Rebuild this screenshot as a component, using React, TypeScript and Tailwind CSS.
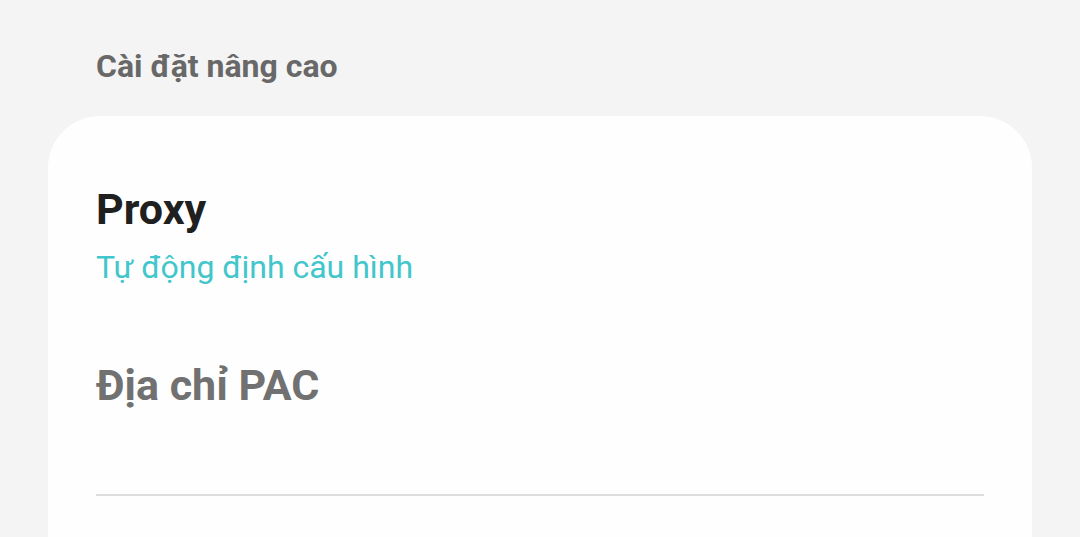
export default function App() {
  return (
    <div className="min-h-screen w-full bg-[#f4f4f4] px-12 font-['Roboto',sans-serif] overflow-hidden">
      <div className="pl-12 pt-[48px] h-[84px]">
        <div className="text-[32px] leading-[36px] font-bold text-[#686868]">Cài đặt nâng cao</div>
      </div>
      <div className="mt-[32px] rounded-t-[52px] bg-[#fefefe] px-12 pt-[68px] pb-10">
        <div className="text-[43px] leading-[50px] font-bold text-[#202020]">Proxy</div>
        <div className="text-[32px] leading-[38px] text-[#41c6cb] mt-[14px]">Tự động định cấu hình</div>
        <div className="mt-[74px] text-[43px] leading-[50px] font-bold text-[#717171]">Địa chỉ PAC</div>
        <div className="mt-[84px] h-[2px] bg-[#dcdcdc]" />
        <div className="h-20" />
      </div>
    </div>
  );
}
